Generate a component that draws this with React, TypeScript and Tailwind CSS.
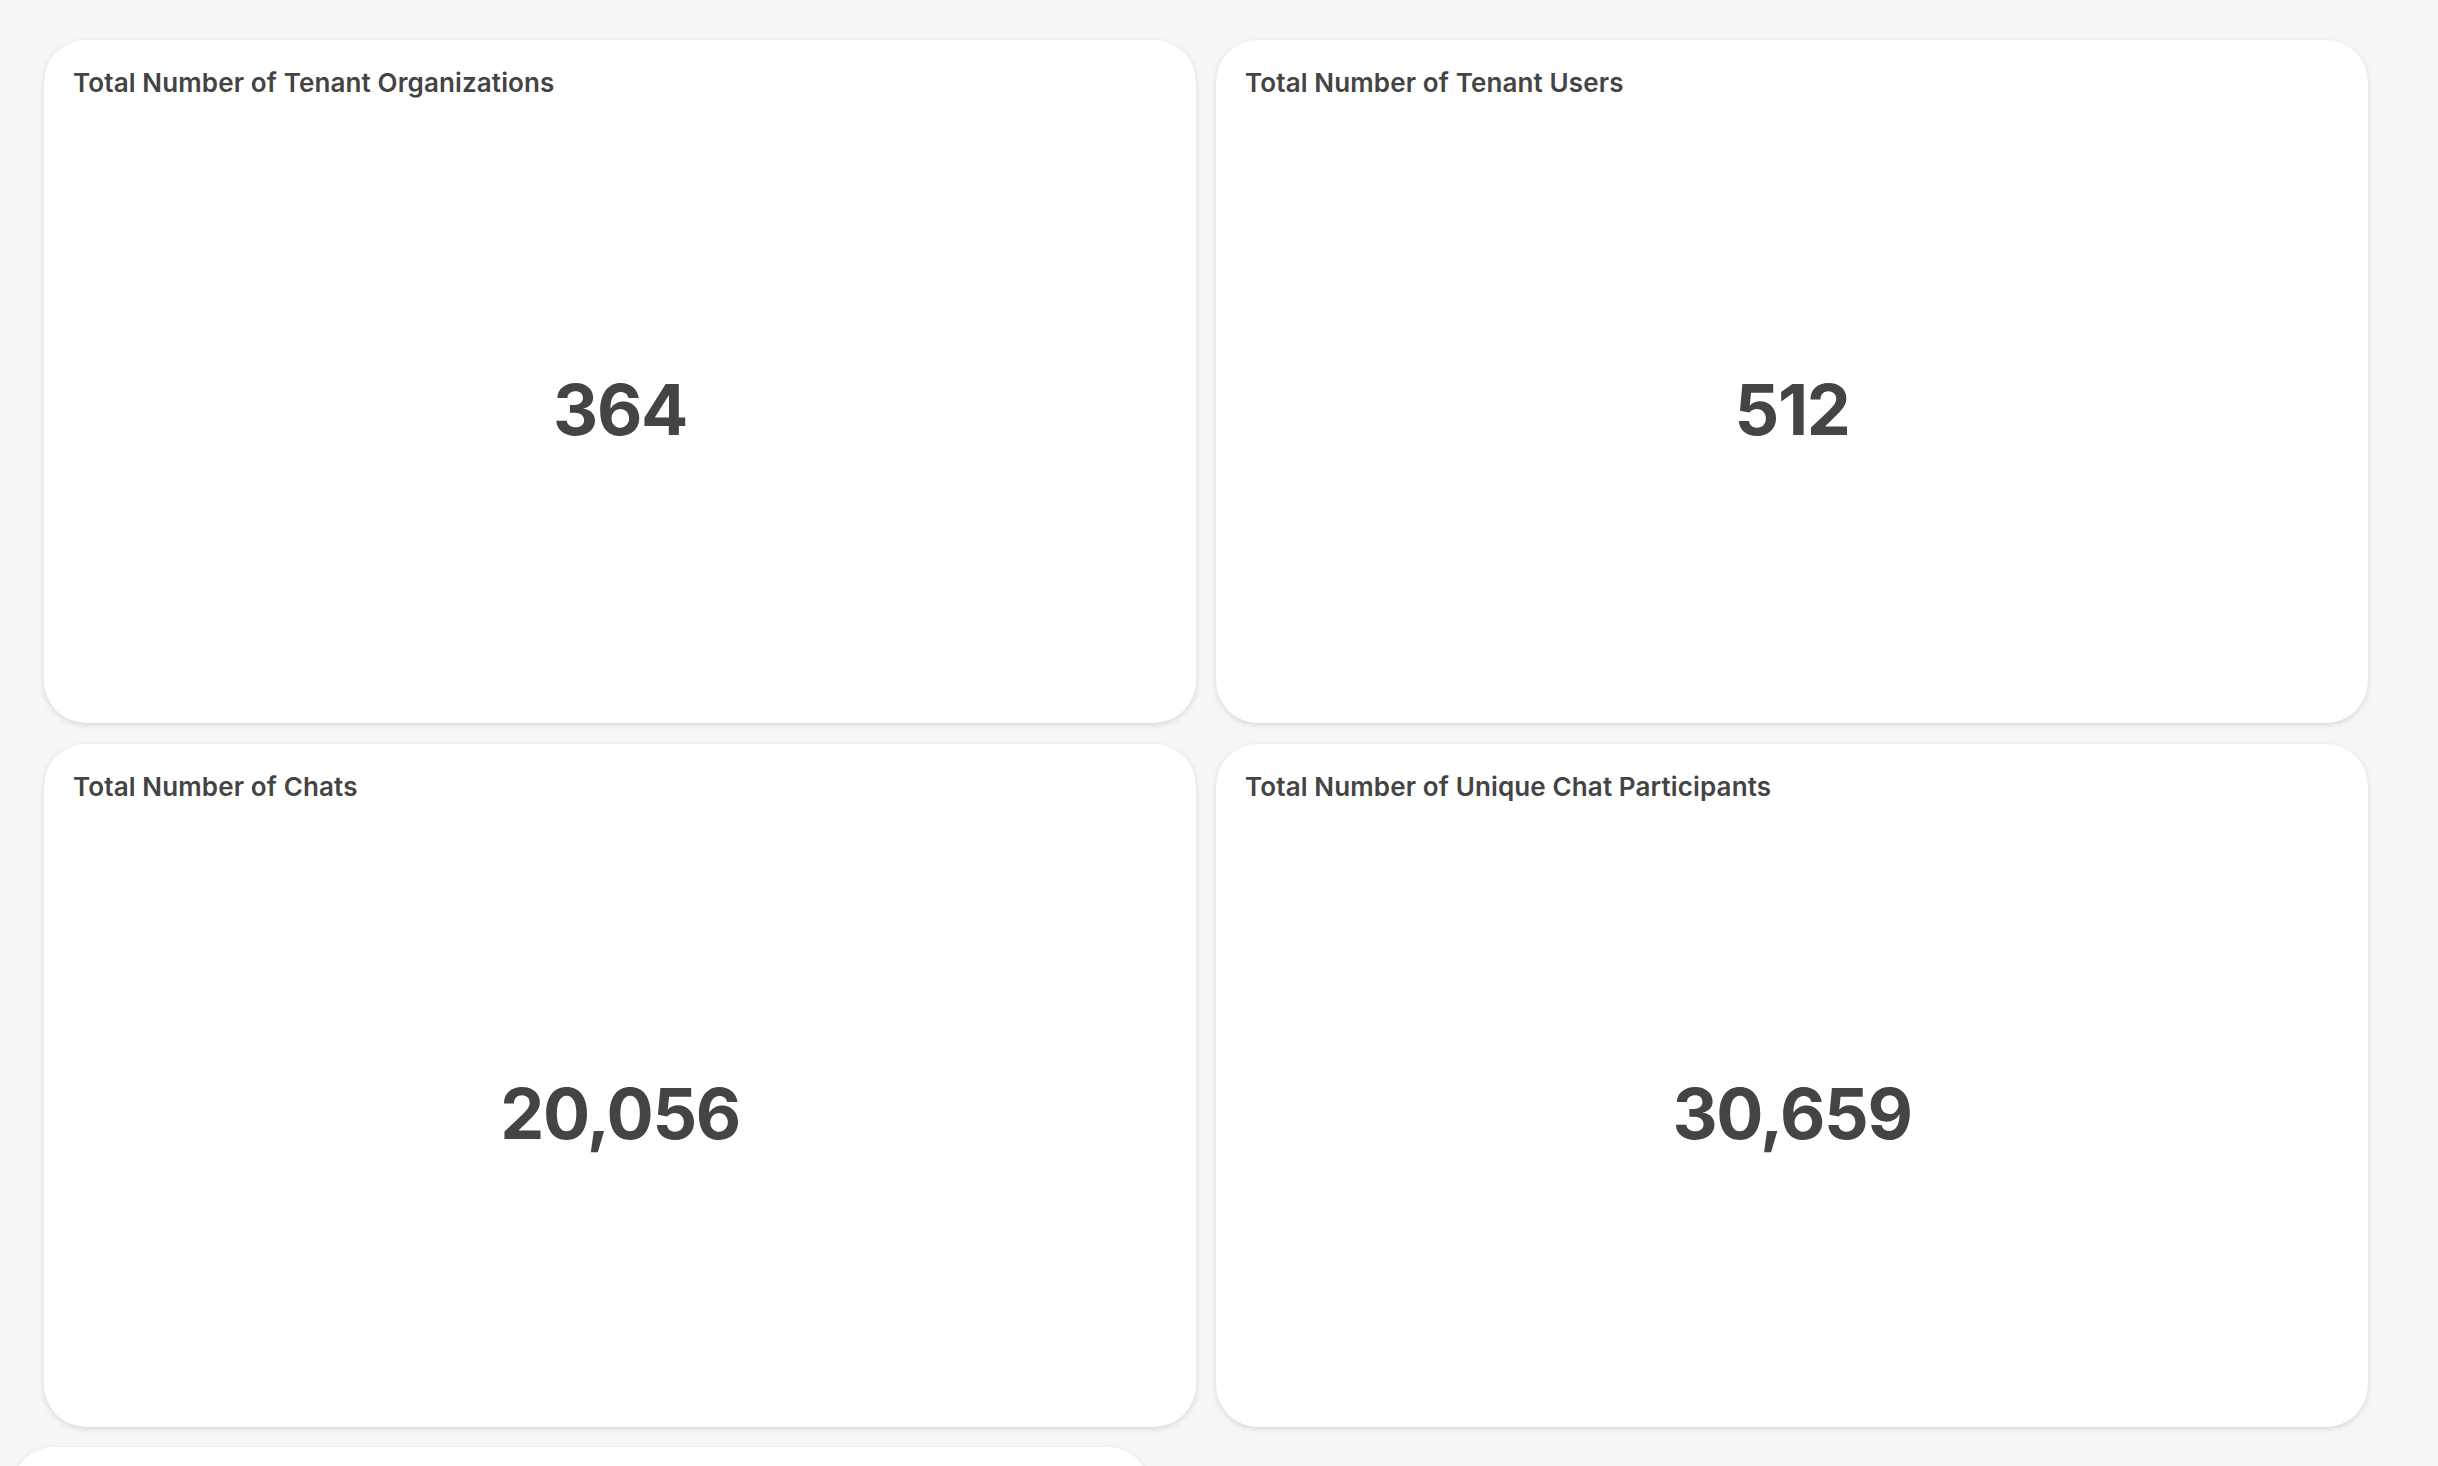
const stats = [
  { title: 'Total Number of Tenant Organizations', value: '364' },
  { title: 'Total Number of Tenant Users', value: '512' },
  { title: 'Total Number of Chats', value: '20,056' },
  { title: 'Total Number of Unique Chat Participants', value: '30,659' },
]

function StatCard({ title, value }: { title: string; value: string }) {
  return (
    <div className="flex flex-col h-[683px] bg-white rounded-[42px] shadow-[0_2px_6px_rgba(0,0,0,0.13)] px-[29px] pt-[25px] pb-[28px]">
      <h3 className="text-[26px] leading-[36px] font-semibold text-[#444444] tracking-[0.005em]">{title}</h3>
      <div className="flex-1 flex items-center justify-center pt-[22px]">
        <span className="text-[70px] font-bold text-[#444444] tracking-[-0.02em]">{value}</span>
      </div>
    </div>
  )
}

export default function App() {
  return (
    <div
      className="h-screen overflow-hidden bg-[#f7f7f7] pt-10"
      style={{ fontFamily: 'Inter, "Noto Sans", sans-serif' }}
    >
      <div className="grid grid-cols-2 gap-x-5 gap-y-[21px] pl-[44px] pr-[70px]">
        {stats.map((s) => (
          <StatCard key={s.title} title={s.title} value={s.value} />
        ))}
      </div>
      {/* next row, cut off by the viewport */}
      <div className="pl-3 pt-5">
        <div className="w-[1138px] h-[683px] bg-white rounded-[42px] shadow-[0_2px_6px_rgba(0,0,0,0.13)]" />
      </div>
    </div>
  )
}
